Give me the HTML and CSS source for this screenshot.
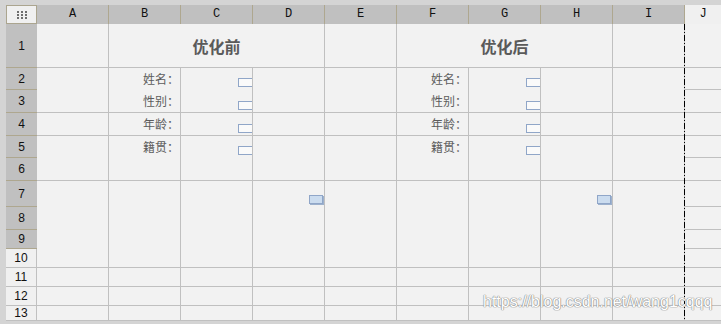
FILE: index.html
```html
<!DOCTYPE html>
<html lang="zh-CN">
<head>
  <meta charset="UTF-8">
  <meta name="viewport" content="width=device-width, initial-scale=1.0">
  <title>优化前 / 优化后</title>
  <link rel="stylesheet" href="styles.css">
</head>
<body>
  <div class="sheet">
    <div class="row">
      <div class="corner">
        <svg width="10" height="8" viewBox="0 0 10 8">
          <rect x="0" y="0" width="2" height="2"/><rect x="4" y="0" width="2" height="2"/><rect x="8" y="0" width="2" height="2"/>
          <rect x="0" y="3" width="2" height="2"/><rect x="4" y="3" width="2" height="2"/><rect x="8" y="3" width="2" height="2"/>
          <rect x="0" y="6" width="2" height="2"/><rect x="4" y="6" width="2" height="2"/><rect x="8" y="6" width="2" height="2"/>
        </svg>
      </div>
      <div class="ch">A</div><div class="ch">B</div><div class="ch">C</div><div class="ch">D</div><div class="ch">E</div>
      <div class="ch">F</div><div class="ch">G</div><div class="ch">H</div><div class="ch">I</div><div class="ch j">J</div>
    </div>

    <div class="row">
      <div class="rh">1</div>
      <div class="c"></div>
      <div class="c title">优化前</div>
      <div class="c"></div>
      <div class="c title">优化后</div>
      <div class="c"></div>
      <div class="c j"></div>
    </div>

    <div class="row open">
      <div class="rh">2</div>
      <div class="c"></div><div class="c lbl">姓名：</div><div class="c mk"><span class="box"></span></div><div class="c"></div><div class="c"></div>
      <div class="c lbl">姓名：</div><div class="c mk"><span class="box"></span></div><div class="c"></div><div class="c"></div><div class="c j"></div>
    </div>

    <div class="row">
      <div class="rh">3</div>
      <div class="c"></div><div class="c lbl">性别：</div><div class="c mk"><span class="box"></span></div><div class="c"></div><div class="c"></div>
      <div class="c lbl">性别：</div><div class="c mk"><span class="box"></span></div><div class="c"></div><div class="c"></div><div class="c j"></div>
    </div>

    <div class="row">
      <div class="rh">4</div>
      <div class="c"></div><div class="c lbl">年龄：</div><div class="c mk"><span class="box"></span></div><div class="c"></div><div class="c"></div>
      <div class="c lbl">年龄：</div><div class="c mk"><span class="box"></span></div><div class="c"></div><div class="c"></div><div class="c j"></div>
    </div>

    <div class="row open">
      <div class="rh">5</div>
      <div class="c"></div><div class="c lbl">籍贯：</div><div class="c mk"><span class="box"></span></div><div class="c"></div><div class="c"></div>
      <div class="c lbl">籍贯：</div><div class="c mk"><span class="box"></span></div><div class="c"></div><div class="c"></div><div class="c j"></div>
    </div>

    <div class="row">
      <div class="rh">6</div>
      <div class="c"></div><div class="c"></div><div class="c"></div><div class="c"></div><div class="c"></div>
      <div class="c"></div><div class="c"></div><div class="c"></div><div class="c"></div><div class="c j"></div>
    </div>

    <div class="row open">
      <div class="rh">7</div>
      <div class="c"></div><div class="c"></div><div class="c"></div><div class="c mk big"><span class="box"></span></div><div class="c"></div>
      <div class="c"></div><div class="c"></div><div class="c mk big"><span class="box"></span></div><div class="c"></div><div class="c j"></div>
    </div>

    <div class="row open">
      <div class="rh">8</div>
      <div class="c"></div><div class="c"></div><div class="c"></div><div class="c"></div><div class="c"></div>
      <div class="c"></div><div class="c"></div><div class="c"></div><div class="c"></div><div class="c j"></div>
    </div>

    <div class="row open">
      <div class="rh">9</div>
      <div class="c"></div><div class="c"></div><div class="c"></div><div class="c"></div><div class="c"></div>
      <div class="c"></div><div class="c"></div><div class="c"></div><div class="c"></div><div class="c j"></div>
    </div>

    <div class="row">
      <div class="rh lt">10</div>
      <div class="c"></div><div class="c"></div><div class="c"></div><div class="c"></div><div class="c"></div>
      <div class="c"></div><div class="c"></div><div class="c"></div><div class="c"></div><div class="c j"></div>
    </div>

    <div class="row">
      <div class="rh lt">11</div>
      <div class="c"></div><div class="c"></div><div class="c"></div><div class="c"></div><div class="c"></div>
      <div class="c"></div><div class="c"></div><div class="c"></div><div class="c"></div><div class="c j"></div>
    </div>

    <div class="row">
      <div class="rh lt">12</div>
      <div class="c"></div><div class="c"></div><div class="c"></div><div class="c"></div><div class="c"></div>
      <div class="c"></div><div class="c"></div><div class="c"></div><div class="c"></div><div class="c j"></div>
    </div>

    <div class="row">
      <div class="rh lt">13</div>
      <div class="c"></div><div class="c"></div><div class="c"></div><div class="c"></div><div class="c"></div>
      <div class="c"></div><div class="c"></div><div class="c"></div><div class="c"></div><div class="c j"></div>
    </div>
  </div>

  <div class="mark">https://blog.csdn.net/wang1cqqq</div>
</body>
</html>
```

FILE: styles.css
```css
body {
  margin: 0;
  padding: 5px 0 0 6px;
  height: 324px;
  box-sizing: border-box;
  overflow: hidden;
  position: relative;
  background: #d4d4d4;
  font-family: "Noto Sans CJK SC", "Liberation Sans", sans-serif;
}
.sheet {
  position: relative;
  display: grid;
  grid-template-columns: 31px repeat(9, 72px) 36px;
  grid-template-rows: 19px 44px 22px 23px 23px 22px 23px 26px 23px 19px 19px 19px 19px;
}
/* page break line between I and J */
.sheet::after {
  content: "";
  position: absolute;
  left: 678px;
  top: 19px;
  bottom: 0;
  width: 1px;
  background: repeating-linear-gradient(to bottom, #000 0 6px, transparent 6px 8px, #000 8px 9px, transparent 9px 11px);
}
.row {
  display: contents;
}
.corner {
  background: #f0f0f0;
  border: 1px solid #aba58f;
  display: flex;
  align-items: center;
  justify-content: center;
}
.corner svg {
  fill: #6e6e6e;
}
.ch {
  background: #c0c0c0;
  border-right: 1px solid #aea78f;
  font-family: "Liberation Mono", monospace;
  font-size: 12px;
  line-height: 19px;
  text-align: center;
  color: #111;
}
.ch.j {
  background: #f0f0f0;
  border-right: none;
}
.rh {
  background: #c0c0c0;
  border-bottom: 1px solid #aea78f;
  display: flex;
  align-items: center;
  justify-content: center;
  font-family: "Liberation Sans", sans-serif;
  font-size: 12px;
  color: #111;
}
.rh.lt {
  background: #f0f0f0;
  border-bottom-color: #c0c0c0;
  border-right: 1px solid #c0c0c0;
}
.c {
  background: #f2f2f2;
  border-right: 1px solid #c0c0c0;
  border-bottom: 1px solid #c0c0c0;
}
.c.j {
  border-right: none;
}
.open > .c {
  border-bottom: none;
}
.open > .c.j {
  border-bottom: 1px solid #c0c0c0;
}
.title {
  grid-column: span 3;
  display: flex;
  align-items: center;
  justify-content: center;
  font-size: 16px;
  font-weight: bold;
  color: #5a5a5a;
}
.lbl {
  display: flex;
  align-items: center;
  justify-content: flex-end;
  padding: 0 1px 2px 0;
  font-family: "Noto Sans CJK JP", "Noto Sans CJK SC", sans-serif;
  font-size: 12px;
  color: #5c5c5c;
}
.mk {
  display: flex;
  align-items: flex-end;
  justify-content: flex-end;
  padding-bottom: 2px;
}
.open > .mk {
  padding-bottom: 3px;
}
.box {
  width: 14px;
  height: 9px;
  box-sizing: border-box;
  border: 1px solid #90a6c8;
  border-right: none;
  background: #fafafa;
}
.big .box {
  width: 14px;
  height: 9px;
  border-right: 1px solid #8ea5c7;
  background: #cbdcef;
  box-shadow: 1px 1px 0 #9db1cd;
  margin-right: 1px;
}
.mark {
  position: absolute;
  left: 483px;
  top: 293px;
  font-family: "Liberation Sans", sans-serif;
  font-size: 16px;
  color: #fff;
  text-shadow: 0 0 1px #888, 0 0 1px #888, 0 0 1px #888;
  white-space: nowrap;
}
```
